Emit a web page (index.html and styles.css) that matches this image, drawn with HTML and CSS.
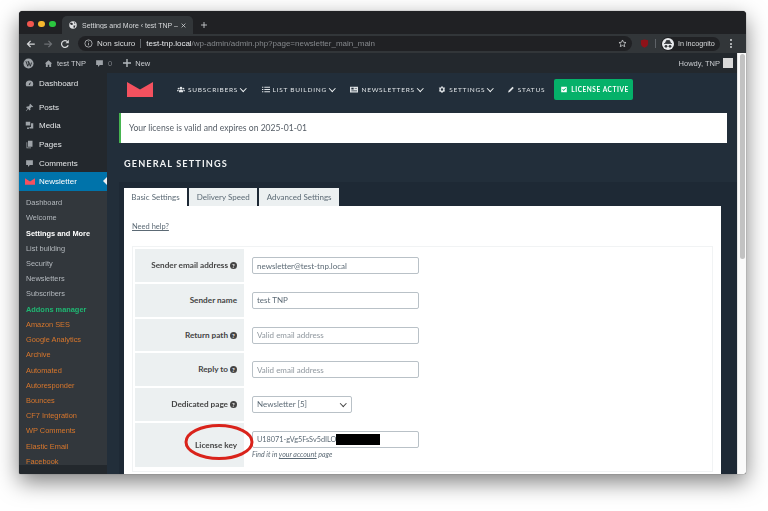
FILE: index.html
```html
<!DOCTYPE html>
<html lang="it">
<head>
    <meta charset="UTF-8">
    <title>Settings and More ‹ test TNP</title>
    <link rel="stylesheet" href="styles.css">
</head>
<body>

<div class="window">
    <div class="tabstrip">
        <div class="lights">
            <span class="light red"></span>
            <span class="light yellow"></span>
            <span class="light green"></span>
        </div>
        <div class="tab">
            <svg class="globe" viewBox="0 0 16 16"><circle cx="8" cy="8" r="7.5" fill="#dfe1e3"/><path d="M3 3l4 1 1 3-3 1-3-2zM9 9l4 0-2 5-2-1zM10 2l3 2-2 2z" fill="#2b2d30"/></svg>
            <span class="tab-title">Settings and More ‹ test TNP –</span>
            <svg class="tab-close" viewBox="0 0 8 8"><path d="M1 1l6 6M7 1L1 7" stroke="#d7d9db" stroke-width="1.2"/></svg>
        </div>
        <svg class="tab-new" viewBox="0 0 8 8"><path d="M4 0v8M0 4h8" stroke="#d5d7d9" stroke-width="1.100"/></svg>
    </div>

    <div class="toolbar">
        <svg class="tool" viewBox="0 0 12 12"><path d="M10.5 6H2M5.500 2.200L1.800 6l3.700 3.800" fill="none" stroke="#d5d7d9" stroke-width="1.5"/></svg>
        <svg class="tool" viewBox="0 0 12 12"><path d="M1.500 6H10M6.500 2.200L10.200 6 6.500 9.800" fill="none" stroke="#6d7074" stroke-width="1.5"/></svg>
        <svg class="tool" viewBox="0 0 12 12"><path d="M9.800 7.400A4.100 4.100 0 1 1 9 3.200" fill="none" stroke="#d5d7d9" stroke-width="1.5"/><path d="M10.600 1v4H6.600z" fill="#d5d7d9"/></svg>
        <div class="omnibox">
            <svg class="info" viewBox="0 0 12 12"><circle cx="6" cy="6" r="4.800" fill="none" stroke="#c8cacc" stroke-width="1"/><path d="M6 5.200v3.200M6 3.200v1" stroke="#c8cacc" stroke-width="1"/></svg>
            <span class="not-secure">Non sicuro</span>
            <span class="url"><b>test-tnp.local</b>/wp-admin/admin.php?page=newsletter_main_main</span>
            <svg class="star" viewBox="0 0 12 12"><path d="M6 1.300l1.400 3.100 3.300.3-2.500 2.200.8 3.300L6 8.500l-3 1.700.8-3.300L1.300 4.700l3.300-.3z" fill="none" stroke="#d5d7d9" stroke-width="1"/></svg>
        </div>
        <svg class="shield" viewBox="0 0 10 10"><path d="M1 1.500L5 .5l4 1v3.500C9 7.500 7 9 5 9.700 3 9 1 7.500 1 5z" fill="#8e1219"/></svg>
        <span class="tool-sep"></span>
        <div class="incognito">
            <span class="incognito-face"><svg viewBox="0 0 12 12"><path d="M3.500 5l1-2.500h3l1 2.500zM2 5.500h8" stroke="#33363a" fill="#33363a" stroke-width="0.800"/><circle cx="4" cy="8.300" r="1.400" fill="#33363a"/><circle cx="8" cy="8.300" r="1.400" fill="#33363a"/></svg></span>
            <span>In incognito</span>
        </div>
        <span class="kebab"><i></i><i></i><i></i></span>
    </div>

    <div class="viewport">
        <div class="page">
            <div class="adminbar">
                <svg class="wp-logo" viewBox="0 0 12 12"><circle cx="6" cy="6" r="5.500" fill="#9ea3a8"/><path d="M3.200 3.500l2 5.500 1-3-.8-2.500M6 3.500l2 5.500 1.300-4" fill="none" stroke="#23282d" stroke-width="1"/></svg>
                <svg class="bar-icon" viewBox="0 0 12 12"><path d="M6 1.500L1 6h1.500v4.500H5V7.500h2v3h2.500V6H11z" fill="#9ea3a8"/></svg>
                <span class="bar-text">test TNP</span>
                <svg class="bar-icon comment" viewBox="0 0 12 12"><path d="M1.500 1.500h9v6.500H6.500L4 10.500V8H1.500z" fill="#9ea3a8"/></svg>
                <span class="bar-count">0</span>
                <svg class="bar-icon plus" viewBox="0 0 8 8"><path d="M4 0v8M0 4h8" stroke="#b4b9be" stroke-width="1.400"/></svg>
                <span class="bar-text">New</span>
                <span class="howdy">Howdy, TNP</span>
                <span class="avatar"></span>
            </div>

            <div class="wp-body">
                <nav class="sidebar">
                    <div class="menu-item first">
                        <svg class="menu-icon" viewBox="0 0 12 12"><path d="M6 2a5 5 0 0 0-5 5c0 1 .3 2 .8 2.500h8.400c.5-.5.800-1.500.800-2.500a5 5 0 0 0-5-5zm.6 5.600a1 1 0 0 1-1.600-1L8 4z" fill="#9ea3a8"/></svg>
                        Dashboard
                    </div>
                    <div class="menu-item gap">
                        <svg class="menu-icon" viewBox="0 0 12 12"><path d="M7 1l4 4-1 .5-1-.5-2 2 .3 2-1 1-2-2L1.500 11 1 10.500 3.500 7.500l-2-2 1-1 2 .3 2-2-.5-1z" fill="#9ea3a8"/></svg>
                        Posts
                    </div>
                    <div class="menu-item">
                        <svg class="menu-icon" viewBox="0 0 12 12"><path d="M1 1h6v5H1zM8 3h3v7H6V8h2z" fill="#9ea3a8"/><circle cx="4" cy="9.500" r="1.300" fill="#9ea3a8"/></svg>
                        Media
                    </div>
                    <div class="menu-item">
                        <svg class="menu-icon" viewBox="0 0 12 12"><path d="M4 1h6v8H4z" fill="#9ea3a8"/><path d="M2 3h1v7h5v1H2z" fill="#9ea3a8"/></svg>
                        Pages
                    </div>
                    <div class="menu-item">
                        <svg class="menu-icon" viewBox="0 0 12 12"><path d="M1.500 1.500h9v6.500H6.500L4 10.500V8H1.500z" fill="#9ea3a8"/></svg>
                        Comments
                    </div>
                    <div class="menu-item current">
                        <svg class="menu-icon logo-small" viewBox="0 0 14 9"><path d="M0 0l7 4.500L14 0v9H0z" fill="#f4515f"/></svg>
                        Newsletter
                    </div>
                    <ul class="submenu">
                        <li>Dashboard</li>
                        <li>Welcome</li>
                        <li class="active">Settings and More</li>
                        <li>List building</li>
                        <li>Security</li>
                        <li>Newsletters</li>
                        <li>Subscribers</li>
                        <li class="addons">Addons manager</li>
                        <li class="addon">Amazon SES</li>
                        <li class="addon">Google Analytics</li>
                        <li class="addon">Archive</li>
                        <li class="addon">Automated</li>
                        <li class="addon">Autoresponder</li>
                        <li class="addon">Bounces</li>
                        <li class="addon">CF7 Integration</li>
                        <li class="addon">WP Comments</li>
                        <li class="addon">Elastic Email</li>
                        <li class="addon">Facebook</li>
                    </ul>
                </nav>

                <main class="content">
                    <div class="tnp-nav">
                        <svg class="tnp-logo" viewBox="0 0 26 15"><path d="M0 0l13 7.500L26 0v15H0z" fill="#f4515f"/></svg>
                        <span class="nav-link">
                            <svg class="nav-icon" viewBox="0 0 12 10"><circle cx="6" cy="3" r="2" fill="#dfe3e6"/><circle cx="2.300" cy="3.500" r="1.300" fill="#dfe3e6"/><circle cx="9.700" cy="3.500" r="1.300" fill="#dfe3e6"/><path d="M3 9V7a2 2 0 0 1 2-1.500h2A2 2 0 0 1 9 7v2zM0 7.500C0 6 1 5.500 2.500 5.500L2.300 7.500zM12 7.500c0-1.500-1-2-2.500-2l.2 2z" fill="#dfe3e6"/></svg>
                            Subscribers <i class="chev"></i>
                        </span>
                        <span class="nav-link">
                            <svg class="nav-icon" viewBox="0 0 12 10"><path d="M0 1h2v1.500H0zM3.500 1H12v1.500H3.500zM0 4.300h2v1.500H0zM3.500 4.300H12v1.500H3.500zM0 7.600h2v1.500H0zM3.500 7.600H12v1.500H3.500z" fill="#dfe3e6"/></svg>
                            List building <i class="chev"></i>
                        </span>
                        <span class="nav-link">
                            <svg class="nav-icon" viewBox="0 0 12 10"><path fill-rule="evenodd" d="M0 1h12v8.500H0zM2 2.500v2.500h3.500V2.500zM7 3v1h3.500V3zM2 6.500v1h8.500v-1z" fill="#dfe3e6"/></svg>
                            Newsletters <i class="chev"></i>
                        </span>
                        <span class="nav-link tight">
                            <svg class="nav-icon" viewBox="0 0 12 12"><circle cx="6" cy="6" r="3.300" fill="none" stroke="#dfe3e6" stroke-width="2.400"/><path d="M6 0v12M.8 3l10.400 6M11.200 3L.8 9" stroke="#dfe3e6" stroke-width="1.600" stroke-dasharray="2.200 7.600"/></svg>
                            Settings <i class="chev"></i>
                        </span>
                        <span class="nav-link">
                            <svg class="nav-icon" viewBox="0 0 12 12"><path d="M1 11l.8-3L8.500 1.300 10.700 3.500 4 10.200z" fill="#dfe3e6"/></svg>
                            Status
                        </span>
                        <span class="license-active">
                            <svg class="nav-icon" viewBox="0 0 10 10"><path fill-rule="evenodd" d="M1 1h8v8H1zM2.500 5l2 2 3.500-3.500-.8-.8L4.500 5.400 3.300 4.200z" fill="#ffffff"/></svg>
                            License active
                        </span>
                    </div>

                    <div class="notice">Your license is valid and expires on 2025-01-01</div>

                    <h1 class="page-title">General Settings</h1>

                    <div class="panel">
                        <div class="tabs">
                            <span class="settings-tab selected">Basic Settings</span>
                            <span class="settings-tab">Delivery Speed</span>
                            <span class="settings-tab">Advanced Settings</span>
                        </div>
                        <div class="tab-body">
                            <a class="help" href="#">Need help?</a>
                            <div class="form-box">
                                <div class="form-row">
                                    <div class="form-label">Sender email address <i class="q">?</i></div>
                                    <div class="form-field"><input class="text" value="newsletter@test-tnp.local"></div>
                                </div>
                                <div class="form-row">
                                    <div class="form-label">Sender name</div>
                                    <div class="form-field"><input class="text" value="test TNP"></div>
                                </div>
                                <div class="form-row">
                                    <div class="form-label">Return path <i class="q">?</i></div>
                                    <div class="form-field"><input class="text" placeholder="Valid email address"></div>
                                </div>
                                <div class="form-row">
                                    <div class="form-label">Reply to <i class="q">?</i></div>
                                    <div class="form-field"><input class="text" placeholder="Valid email address"></div>
                                </div>
                                <div class="form-row">
                                    <div class="form-label">Dedicated page <i class="q">?</i></div>
                                    <div class="form-field">
                                        <div class="select">Newsletter [5]<i class="chev dark"></i></div>
                                    </div>
                                </div>
                                <div class="form-row license">
                                    <div class="form-label">License key</div>
                                    <div class="form-field">
                                        <div class="text key">U18071-gVg5FsSv5dILO<span class="redacted"></span></div>
                                        <p class="hint">Find it in <u>your account</u> page</p>
                                    </div>
                                </div>
                            </div>
                        </div>
                    </div>
                </main>
            </div>
        </div>
        <div class="scrollbar"><span class="thumb"></span></div>
    </div>

    <!-- red hand-drawn circle over the label -->
    <svg class="marker" viewBox="0 0 72 38"><ellipse cx="36" cy="19" rx="33" ry="16.500" fill="none" stroke="#d9231b" stroke-width="3"/></svg>
</div>

</body>
</html>
```

FILE: styles.css
```css
html, body {
    margin: 0;
    height: 511px;
    overflow: hidden;
    background-color: #ffffff;
}
body {
    padding: 11px 0 0 19px;
    box-sizing: border-box;
    font-family: "Liberation Sans", Arial, sans-serif;
}
.window {
    position: relative;
    width: 727px;
    height: 463px;
    overflow: hidden;
    border-radius: 4px 4px 2px 2px;
    background-color: #202124;
    box-shadow: 0 0 1px #444444, 0 8px 22px rgba(0, 0, 0, 0.5);
    filter: blur(0.3px);
}

/* Chrome */
.tabstrip {
    display: flex;
    align-items: flex-end;
    height: 23px;
    background-color: #202124;
}
.lights {
    display: flex;
    gap: 4.500px;
    padding: 0 6.500px 7px 8px;
}
.light {
    width: 6.500px;
    height: 6.500px;
    border-radius: 50%;
}
.red { background-color: #f1564e; }
.yellow { background-color: #f5b72e; }
.green { background-color: #2bc63f; }
.tab {
    display: flex;
    align-items: center;
    width: 131px;
    height: 18px;
    padding: 0 6px 0 7px;
    box-sizing: border-box;
    background-color: #323639;
    border-radius: 5px 5px 0 0;
    color: #d7d9db;
    font-size: 7px;
}
.globe {
    width: 8px;
    height: 8px;
    margin-right: 5px;
    flex: none;
}
.tab-title {
    flex: 1;
    white-space: nowrap;
    overflow: hidden;
}
.tab-close {
    width: 5px;
    height: 5px;
    margin-right: 1px;
    flex: none;
}
.tab-new {
    width: 6px;
    height: 6px;
    margin: 0 0 6px 8px;
}
.toolbar {
    display: flex;
    align-items: center;
    height: 19px;
    background-color: #323639;
    color: #d7d9db;
    font-size: 8px;
}
.tool {
    width: 10px;
    height: 10px;
    margin-left: 4px;
    margin-right: 3px;
    flex: none;
}
.toolbar .tool:first-child {
    margin-left: 7px;
}
.omnibox {
    display: flex;
    align-items: center;
    width: 554px;
    height: 15px;
    margin-left: 5px;
    padding: 0 6px;
    box-sizing: border-box;
    border-radius: 8px;
    background-color: #202124;
}
.info {
    width: 9px;
    height: 9px;
    margin-right: 4px;
}
.not-secure {
    padding-right: 5px;
    border-right: 1px solid #5f6368;
    line-height: 9px;
}
.url {
    flex: 1;
    margin-left: 5px;
    color: #85888c;
    white-space: nowrap;
}
.url b {
    font-weight: normal;
    color: #e8eaed;
}
.star {
    width: 9px;
    height: 9px;
    margin-right: -1px;
}
.shield {
    width: 9px;
    height: 9px;
    margin-left: 8px;
    flex: none;
}
.tool-sep {
    width: 1px;
    height: 9px;
    margin: 0 5px 0 6px;
    background-color: #5f6368;
    flex: none;
}
.incognito {
    display: flex;
    align-items: center;
    gap: 4px;
    height: 14px;
    padding-right: 5px;
    border-radius: 7px;
    background-color: #202124;
    font-size: 7.200px;
    white-space: nowrap;
}
.incognito-face {
    display: flex;
    width: 12px;
    height: 12px;
    margin-left: 1px;
    border-radius: 50%;
    background-color: #e8eaed;
}
.kebab {
    display: flex;
    flex-direction: column;
    gap: 1.500px;
    margin-left: 10px;
}
.kebab i {
    width: 2px;
    height: 2px;
    border-radius: 50%;
    background-color: #d5d7d9;
}

/* Page */
.viewport {
    display: flex;
    height: 421px;
}
.page {
    width: 718px;
    flex: none;
}
.scrollbar {
    flex: 1;
    padding: 1px 1.500px;
    background-color: #fafafa;
    border-left: 1px solid #e4e4e4;
}
.thumb {
    display: block;
    height: 205px;
    width: 5px;
    border-radius: 3px;
    background-color: #c2c2c2;
}

/* Admin bar */
.adminbar {
    display: flex;
    align-items: center;
    height: 20px;
    padding: 0 4px;
    background-color: #23282d;
    color: #c9ccd0;
    font-size: 7.500px;
}
.wp-logo {
    width: 11px;
    height: 11px;
    margin-right: 10px;
}
.bar-icon {
    width: 9px;
    height: 9px;
    margin-right: 4px;
}
.bar-icon.comment {
    margin-left: 9px;
}
.bar-icon.plus {
    width: 8px;
    height: 8px;
}
.bar-count {
    color: #7d8186;
    margin-right: 11px;
}
.howdy {
    margin-left: auto;
    margin-right: 3px;
}
.avatar {
    width: 10px;
    height: 10px;
    background-color: #d9d9d9;
}

.wp-body {
    display: flex;
    height: 401px;
}

/* WP sidebar */
.sidebar {
    width: 88px;
    flex: none;
    background-color: #23282d;
    color: #e2e4e6;
    font-size: 8px;
}
.menu-item {
    display: flex;
    align-items: center;
    height: 18.700px;
    padding-left: 6px;
}
.menu-item.first {
    margin-top: 1px;
}
.menu-item.gap {
    margin-top: 5px;
}
.menu-icon {
    width: 9px;
    height: 9px;
    margin-right: 5px;
    flex: none;
}
.logo-small {
    width: 10px;
    height: 7px;
    margin-right: 4px;
}
.current {
    position: relative;
    background-color: #0073aa;
    color: #ffffff;
}
.current::after {
    content: "";
    position: absolute;
    right: 0;
    top: 5px;
    border: 4px solid transparent;
    border-right-color: #f1f1f1;
    border-left-width: 0;
}
.submenu {
    list-style: none;
    margin: 0;
    padding: 4px 0 0 7px;
    height: 270px;
    background-color: #32373c;
    color: #b4b9be;
    font-size: 7.400px;
}
.submenu li {
    height: 15.230px;
    line-height: 15.230px;
    white-space: nowrap;
}
.submenu .active {
    color: #ffffff;
    font-weight: bold;
}
.submenu .addons {
    color: #1fb672;
    font-weight: bold;
}
.submenu .addon {
    color: #d9772c;
}

/* Newsletter plugin */
.content {
    flex: 1;
    padding: 0 0 0 12px;
    background-color: #222e3a;
    color: #ecf0f1;
    font-family: Lato, "Open Sans", sans-serif;
    overflow: hidden;
}
.tnp-nav {
    display: flex;
    align-items: center;
    height: 33px;
    margin-bottom: 7px;
    padding: 0 0 0 8px;
}
.tnp-logo {
    width: 26px;
    height: 15px;
    margin-right: 24px;
    flex: none;
}
.nav-link {
    display: flex;
    align-items: center;
    margin-right: 15px;
    font-size: 6.500px;
    letter-spacing: 0.750px;
    text-transform: uppercase;
    color: #dfe3e6;
    white-space: nowrap;
}
.nav-link.tight {
    margin-right: 13px;
}
.nav-icon {
    width: 8px;
    height: 7px;
    margin-right: 3px;
    flex: none;
}
.chev {
    display: inline-block;
    width: 3.500px;
    height: 3.500px;
    margin: -2px 1px 0 3px;
    border-right: 1px solid #ecf0f1;
    border-bottom: 1px solid #ecf0f1;
    transform: rotate(45deg);
}
.license-active {
    display: flex;
    align-items: center;
    width: 79px;
    height: 21px;
    box-sizing: border-box;
    margin-left: -6px;
    padding-left: 6px;
    border-radius: 2px;
    background-color: #05b169;
    color: #ffffff;
    font-size: 6.500px;
    font-weight: bold;
    letter-spacing: 0.550px;
    text-transform: uppercase;
    white-space: nowrap;
}
.notice {
    width: 608px;
    height: 30px;
    box-sizing: border-box;
    padding-left: 8px;
    line-height: 30px;
    background-color: #ffffff;
    border-left: 2px solid #46b450;
    color: #555d66;
    font-size: 8.600px;
}
.page-title {
    margin: 15px 0 0 5px;
    height: 24px;
    font-size: 9.200px;
    line-height: 12px;
    letter-spacing: 1.100px;
    text-transform: uppercase;
    font-weight: bold;
    color: #f0f2f3;
}
.panel {
    height: 292px;
    padding: 6px 0 0 5px;
    background-color: #1e2935;
}
.tabs {
    display: flex;
    gap: 2.500px;
    height: 18px;
}
.settings-tab {
    padding: 0 7.300px;
    line-height: 18px;
    background-color: #ecf0f1;
    color: #5c6a75;
    font-size: 8px;
}
.settings-tab.selected {
    background-color: #ffffff;
}
.tab-body {
    width: 597px;
    height: 268px;
    padding: 0 8px;
    box-sizing: border-box;
    background-color: #ffffff;
    color: #444444;
}
.help {
    display: block;
    padding-top: 16px;
    height: 24px;
    color: #5c6a75;
    font-size: 7.500px;
}
.form-box {
    width: 581px;
    padding: 2px;
    box-sizing: border-box;
    border: 1px solid #f1f3f4;
}
.form-row {
    display: flex;
    height: 32.800px;
    margin-bottom: 2px;
}
.form-row.license {
    height: 44px;
}
.form-label {
    width: 109px;
    padding-right: 7px;
    box-sizing: border-box;
    background-color: #ecf0f1;
    text-align: right;
    line-height: 33px;
    font-size: 8.200px;
    font-weight: bold;
    color: #444444;
    white-space: nowrap;
}
.license .form-label {
    line-height: 44px;
}
.q {
    display: inline-block;
    width: 7px;
    height: 7px;
    border-radius: 50%;
    background-color: #444444;
    color: #ffffff;
    font-style: normal;
    font-size: 6px;
    line-height: 7px;
    text-align: center;
}
.form-field {
    padding: 8px 0 0 8px;
}
.text, .select {
    display: block;
    width: 167px;
    height: 17px;
    box-sizing: border-box;
    padding: 0 4px;
    border: 1px solid #b9c1c7;
    border-radius: 2px;
    background-color: #ffffff;
    font-family: Lato, "Open Sans", sans-serif;
    font-size: 8px;
    line-height: 15px;
    color: #5c6a75;
    outline: none;
}
.text::placeholder {
    color: #8f979e;
}
.select {
    display: flex;
    justify-content: space-between;
    align-items: center;
    width: 100px;
}
.chev.dark {
    border-color: #444444;
    margin: -2px 2px 0 0;
}
.key {
    display: flex;
    align-items: center;
    font-size: 7.300px;
}
.redacted {
    width: 44px;
    height: 11px;
    background-color: #000000;
}
.hint {
    margin: 2px 0 0 0;
    color: #5c6a75;
    font-size: 7px;
    font-style: italic;
}

.marker {
    position: absolute;
    left: 164px;
    top: 412px;
    width: 72px;
    height: 38px;
}
```
